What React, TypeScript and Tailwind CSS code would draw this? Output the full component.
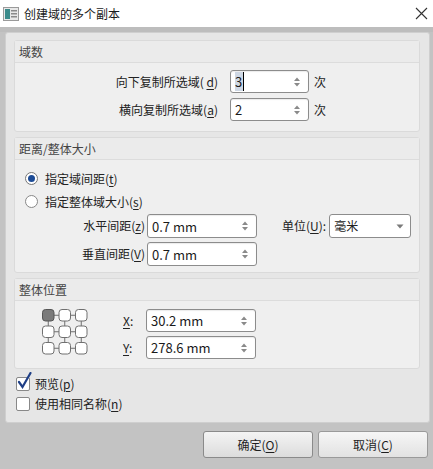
import React from 'react';

const font = { fontFamily: '"Microsoft YaHei", "Noto Sans CJK SC", "Liberation Sans", sans-serif' };

function Arrows() {
  return (
    <svg width="8" height="12" viewBox="0 0 8 12" className="shrink-0">
      <path d="M1 5 L4 1.5 L7 5 Z" fill="#8a8a8a" />
      <path d="M1 7 L4 10.5 L7 7 Z" fill="#8a8a8a" />
    </svg>
  );
}

function SpinBox({ value, w, h = 23, caret }: { value: string; w: string; h?: number; caret?: boolean }) {
  return (
    <div
      className={`${w} ${h === 24 ? 'h-[24px]' : 'h-[23px]'} bg-white border border-[#8c8c8c] rounded-[3px] flex items-center pl-[4px] pr-[7px] shadow-[inset_0_1px_1px_rgba(0,0,0,0.08)]`}
    >
      <span className="flex-1 text-[13px] text-[#1a1a1a] leading-none">
        {caret ? (
          <span className="bg-[#cfd8e4] border-r border-black pr-[1px]">{value}</span>
        ) : (
          value
        )}
      </span>
      <Arrows />
    </div>
  );
}

function Group({ title, h, children }: { title: string; h: string; children: React.ReactNode }) {
  return (
    <div className={`${h} w-[406px] border border-[#dadada] rounded-[3px] bg-[#efefef] flex flex-col`}>
      <div className="h-[22px] shrink-0 border-b border-[#dcdcdc] bg-[#ebebeb] flex items-center pl-[4px] text-[12px] text-[#444]">
        {title}
      </div>
      {children}
    </div>
  );
}

function U({ c }: { c: string }) {
  return <span className="underline underline-offset-2">{c}</span>;
}

function PositionGrid() {
  const pos = [0.5, 17, 33.5];
  const s = 11.5;
  return (
    <svg width="47" height="47" viewBox="0 0 47 47">
      {pos.map((y) => (
        <line key={'h' + y} x1={pos[0] + s / 2} y1={y + s / 2} x2={pos[2] + s / 2} y2={y + s / 2} stroke="#6f6f6f" strokeWidth="1" />
      ))}
      {pos.map((x) => (
        <line key={'v' + x} x1={x + s / 2} y1={pos[0] + s / 2} x2={x + s / 2} y2={pos[2] + s / 2} stroke="#6f6f6f" strokeWidth="1" />
      ))}
      {pos.map((y, r) =>
        pos.map((x, c) => (
          <rect
            key={`${r}-${c}`}
            x={x}
            y={y}
            width={s}
            height={s}
            rx="3"
            fill={r === 0 && c === 0 ? '#7a7a7a' : '#ffffff'}
            stroke={r === 0 && c === 0 ? '#555' : '#707070'}
          />
        ))
      )}
    </svg>
  );
}

export default function App() {
  return (
    <div className="w-[433px] h-[469px] bg-[#c3c3c3] flex flex-col overflow-hidden text-[12px]" style={font}>
      {/* title bar */}
      <div className="h-[27px] bg-white flex items-center shrink-0">
        <svg width="16" height="14" viewBox="0 0 16 14" className="ml-[3px]">
          <rect x="0.5" y="0.5" width="15" height="13" fill="#e8e8e8" stroke="#9a9a9a" />
          <rect x="2" y="2" width="5" height="10" fill="#3a8a8a" />
          <rect x="8" y="3" width="6" height="1.5" fill="#8a8a8a" />
          <rect x="8" y="6" width="6" height="1.5" fill="#8a8a8a" />
          <rect x="8" y="9" width="6" height="1.5" fill="#8a8a8a" />
        </svg>
        <span className="ml-[5px] text-[#1a1a1a]">创建域的多个副本</span>
        <svg width="13" height="13" viewBox="0 0 13 13" className="ml-auto mr-[5px]">
          <path d="M1 1 L12 12 M12 1 L1 12" stroke="#333" strokeWidth="1.1" />
        </svg>
      </div>

      <div className="h-[5px] shrink-0 bg-[#bdbdbd]" />

      {/* main panel */}
      <div className="ml-[5px] w-[425px] h-[391px] bg-[#e6e6e6] border border-[#cfcfcf] rounded-[3px] flex flex-col pl-[8px] pt-[7px] gap-[5px] text-[#222]">
        <Group title="域数" h="h-[92px]">
          <div className="flex flex-col pt-[7px] gap-[5px]">
            <div className="flex items-center">
              <span className="w-[206px] text-right pr-[3px]">
                向下复制所选域( <U c="d" />)
              </span>
              <div className="ml-[9px]">
                <SpinBox value="3" w="w-[79px]" caret />
              </div>
              <span className="ml-[5px]">次</span>
            </div>
            <div className="flex items-center">
              <span className="w-[206px] text-right pr-[3px]">
                横向复制所选域(<U c="a" />)
              </span>
              <div className="ml-[9px]">
                <SpinBox value="2" w="w-[79px]" />
              </div>
              <span className="ml-[5px]">次</span>
            </div>
          </div>
        </Group>

        <Group title="距离/整体大小" h="h-[136px]">
          <div className="flex flex-col pl-[10px] pt-[7px]">
            <div className="flex items-center h-[23px]">
              <span className="w-[13px] h-[13px] rounded-full border border-[#777] bg-white flex items-center justify-center">
                <span className="w-[7px] h-[7px] rounded-full bg-[#1c4b96]" />
              </span>
              <span className="ml-[7px]">
                指定域间距(<U c="t" />)
              </span>
            </div>
            <div className="flex items-center h-[23px]">
              <span className="w-[13px] h-[13px] rounded-full border border-[#888] bg-white" />
              <span className="ml-[7px]">
                指定整体域大小(<U c="s" />)
              </span>
            </div>
          </div>
          <div className="flex flex-col gap-[4px] mt-[1px]">
            <div className="flex items-center">
              <span className="w-[130px] text-right">
                水平间距(<U c="z" />)
              </span>
              <div className="ml-[2px]">
                <SpinBox value="0.7 mm" w="w-[110px]" h={24} />
              </div>
              <span className="ml-[25px]">
                单位(<U c="U" />):
              </span>
              <div className="ml-[3px] w-[82px] h-[24px] bg-white border border-[#8c8c8c] rounded-[3px] flex items-center pl-[4px] pr-[6px]">
                <span className="flex-1">毫米</span>
                <svg width="8" height="5" viewBox="0 0 8 5">
                  <path d="M0.5 0.5 L4 4.5 L7.5 0.5 Z" fill="#7a7a7a" />
                </svg>
              </div>
            </div>
            <div className="flex items-center">
              <span className="w-[130px] text-right">
                垂直间距(<U c="V" />)
              </span>
              <div className="ml-[2px]">
                <SpinBox value="0.7 mm" w="w-[110px]" h={24} />
              </div>
            </div>
          </div>
        </Group>

        <Group title="整体位置" h="h-[91px]">
          <div className="flex pt-[8px]">
            <div className="ml-[27px]">
              <PositionGrid />
            </div>
            <div className="flex flex-col gap-[4px] ml-[34px]">
              <div className="flex items-center">
                <span className="w-[23px]">
                  <U c="X" />:
                </span>
                <SpinBox value="30.2 mm" w="w-[110px]" />
              </div>
              <div className="flex items-center">
                <span className="w-[23px]">
                  <U c="Y" />:
                </span>
                <SpinBox value="278.6 mm" w="w-[110px]" />
              </div>
            </div>
          </div>
        </Group>

        <div className="flex flex-col gap-[6px] pt-[3px] pl-[2px]">
          <div className="flex items-center h-[14px]">
            <span className="relative w-[14px] h-[14px] border border-[#888] rounded-[2px] bg-white">
              <svg width="16" height="18" viewBox="0 0 16 18" className="absolute -top-[6px] left-[0px]">
                <path d="M2 10 L5.5 15 L13.5 1" stroke="#1f3f86" strokeWidth="2.2" fill="none" strokeLinecap="round" />
              </svg>
            </span>
            <span className="ml-[5px]">
              预览(<U c="p" />)
            </span>
          </div>
          <div className="flex items-center h-[14px]">
            <span className="w-[14px] h-[14px] border border-[#888] rounded-[2px] bg-white" />
            <span className="ml-[5px]">
              使用相同名称(<U c="n" />)
            </span>
          </div>
        </div>
      </div>

      {/* buttons */}
      <div className="flex justify-end gap-[5px] pr-[5px] pt-[8px]">
        <button className="w-[110px] h-[27px] rounded-[3px] border border-[#8a8a8a] bg-gradient-to-b from-[#f4f4f4] to-[#dcdcdc] text-[#1e1e1e]">
          确定(<U c="O" />)
        </button>
        <button className="w-[110px] h-[27px] rounded-[3px] border border-[#9a9a9a] bg-gradient-to-b from-[#f6f6f6] to-[#e2e2e2] text-[#1e1e1e]">
          取消(<U c="C" />)
        </button>
      </div>
    </div>
  );
}
